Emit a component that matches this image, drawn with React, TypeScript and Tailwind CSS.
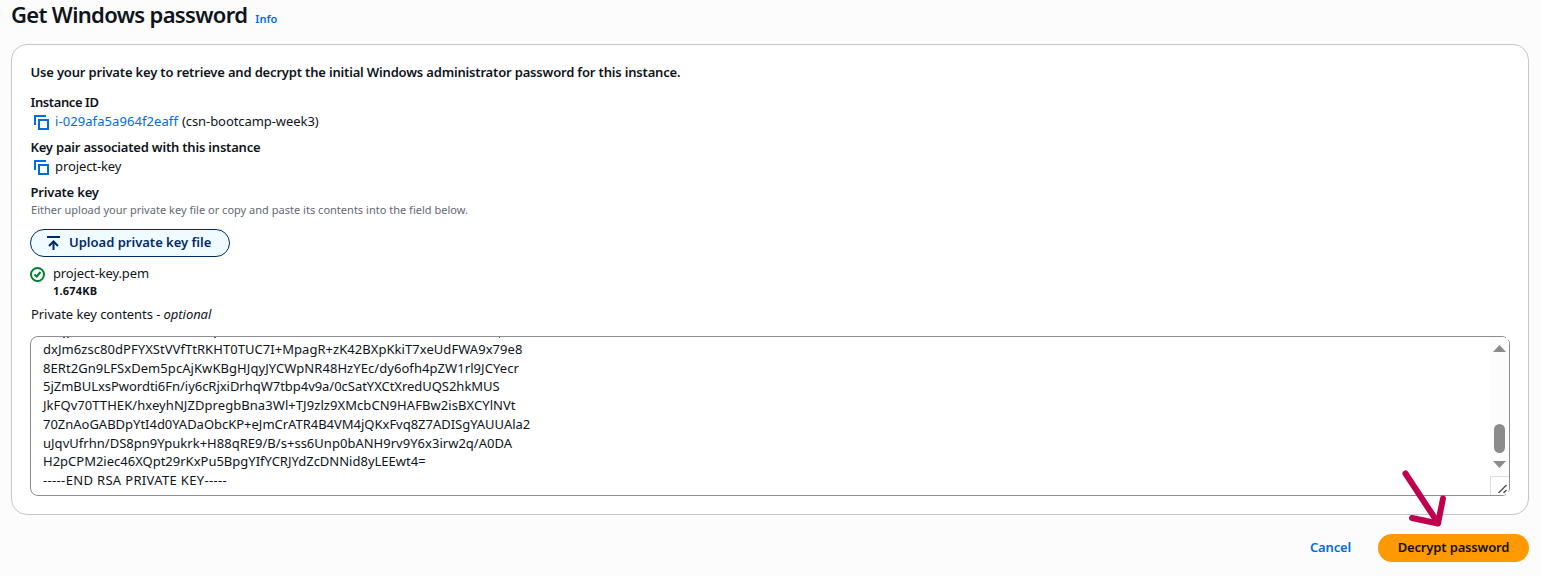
import React from 'react';

const keyLines: { text: string; cls: string }[] = [
  { text: 'dxJm6zsc80dPFYXStVVfTtRKHT0TUC7I+MpagR+zK42BXpKkiT7xeUdFWA9x79e8', cls: 'tracking-[0.05px]' },
  { text: '8ERt2Gn9LFSxDem5pcAjKwKBgHJqyJYCWpNR48HzYEc/dy6ofh4pZW1rl9JCYecr', cls: 'tracking-[0.065px]' },
  { text: '5jZmBULxsPwordti6Fn/iy6cRjxiDrhqW7tbp4v9a/0cSatYXCtXredUQS2hkMUS', cls: 'tracking-[-0.03px]' },
  { text: 'JkFQv70TTHEK/hxeyhNJZDpregbBna3Wl+TJ9zlz9XMcbCN9HAFBw2isBXCYlNVt', cls: 'tracking-[0.065px]' },
  { text: '70ZnAoGABDpYtI4d0YADaObcKP+eJmCrATR4B4VM4jQKxFvq8Z7ADISgYAUUAla2', cls: 'tracking-[-0.015px]' },
  { text: 'uJqvUfrhn/DS8pn9Ypukrk+H88qRE9/B/s+ss6Unp0bANH9rv9Y6x3irw2q/A0DA', cls: 'tracking-[0.02px]' },
  { text: 'H2pCPM2iec46XQpt29rKxPu5BpgYIfYCRJYdZcDNNid8yLEEwt4=', cls: 'tracking-[0px]' },
  { text: '-----END RSA PRIVATE KEY-----', cls: 'tracking-[0.34px]' },
];

function CopyIcon() {
  return (
    <svg width="16" height="16" viewBox="0 0 16 16" fill="none" stroke="#006ce0" strokeWidth="2" className="ml-[3px] mr-[6px] mt-px shrink-0">
      <path d="M2 11V2H13" />
      <path d="M6 6H15V15H6Z" />
    </svg>
  );
}

function UploadIcon() {
  return (
    <svg width="16" height="16" viewBox="0 0 16 16" fill="none" stroke="#002b66" strokeWidth="2" className="shrink-0">
      <path d="M1 2H14" />
      <path d="M7.5 15V6" />
      <path d="M3 11L7.5 6.5L12 11" />
    </svg>
  );
}

function CheckIcon() {
  return (
    <svg width="16" height="16" viewBox="0 0 16 16" fill="none" stroke="#00802f" strokeWidth="2" className="shrink-0">
      <circle cx="7.5" cy="8.5" r="6.5" />
      <path d="M4.5 8.5L6.7 10.5L10.5 6" />
    </svg>
  );
}

function Scrollbar() {
  return (
    <div className="flex w-[19px] shrink-0 flex-col bg-[#fcfcfc]">
      <svg width="19" height="158" viewBox="0 0 19 158" className="block">
        <path d="M3 15L9.5 8L16 15Z" fill="#8b8b8b" />
        <rect x="4" y="87" width="11" height="29" rx="5.5" fill="#8b8b8b" />
        <path d="M3 124L9.5 131L16 124Z" fill="#8b8b8b" />
        <rect x="0.5" y="139.5" width="20" height="20" fill="#fff" stroke="#dcdcdc" />
        <path d="M8.5 156L16.5 148M13.5 156L16.5 153" stroke="#505050" strokeWidth="1.4" />
      </svg>
    </div>
  );
}

export default function App() {
  return (
    <div className="relative h-[576px] w-[1542px] overflow-hidden bg-[#fcfcfd] font-['Noto_Sans',sans-serif] text-[13px] leading-[20px] text-[#0f141a]">
      <header className="flex h-[44px] items-start pl-[11px]">
        <h1 className="whitespace-nowrap text-[22px] font-semibold leading-[29px] tracking-[-0.66px]">Get Windows password</h1>
        <a className="ml-[8px] mt-[9px] text-[11px] font-semibold leading-[20px] text-[#006ce0]">Info</a>
      </header>

      <main className="ml-[11px] h-[471px] w-[1518px] whitespace-nowrap rounded-[16px] border border-[#c6c6cd] bg-white pl-[18px] pt-[17px]">
        <p className="h-[30px] pl-[0.5px] font-semibold tracking-[-0.175px]">Use your private key to retrieve and decrypt the initial Windows administrator password for this instance.</p>

        <div className="h-[45px]">
          <div className="h-[19px] pl-[0.5px] font-semibold tracking-[-0.4px]">Instance ID</div>
          <div className="flex h-[20px] items-center">
            <CopyIcon />
            <a className="tracking-[0.08px] text-[#006ce0]">i-029afa5a964f2eaff</a>
            <span className="ml-[4px] tracking-[-0.07px]">(csn-bootcamp-week3)</span>
          </div>
        </div>

        <div className="h-[45px]">
          <div className="h-[19px] pl-[0.5px] font-semibold tracking-[-0.2px]">Key pair associated with this instance</div>
          <div className="flex h-[20px] items-center">
            <CopyIcon />
            <span className="tracking-[-0.1px]">project-key</span>
          </div>
        </div>

        <div className="h-[19px] pl-[0.5px] font-semibold tracking-[-0.2px]">Private key</div>
        <div className="h-[28px] pl-px text-[11px] leading-[18px] tracking-[0.015px] text-[#656871]">Either upload your private key file or copy and paste its contents into the field below.</div>

        <button className="flex h-[28px] w-[200px] items-center rounded-full border border-[#002b66] bg-[#f0fbff] pl-[15px] font-semibold text-[#002b66]">
          <UploadIcon />
          <span className="-mt-[2px] ml-[7px]">Upload private key file</span>
        </button>

        <div className="mt-[6px] flex h-[41px]">
          <div className="pt-[3px]"><CheckIcon /></div>
          <div className="ml-[7px]">
            <div className="h-[19px] tracking-[-0.13px]">project-key.pem</div>
            <div className="h-[22px] text-[11px] font-bold leading-[18px] tracking-[0.2px]">1.674KB</div>
          </div>
        </div>

        <div className="h-[32px] pl-px tracking-[-0.06px]"><span>Private key contents - </span><i>optional</i></div>

        <div className="relative h-[160px] w-[1480px]">
          <div className="flex h-full w-full overflow-hidden rounded-[8px] border border-[#8c8c94] bg-white">
            <div className="grow pl-[12px] pt-[3px] leading-[18.7px]">
              {keyLines.map((l) => (
                <div key={l.text}><span className={l.cls}>{l.text}</span></div>
              ))}
            </div>
            <Scrollbar />
          </div>
          <svg width="480" height="2" viewBox="0 0 480 2" className="absolute left-0 top-px" stroke="#0f141a" strokeWidth="1">
            <path d="M33 0.5H35M37 0.5H39M184 0.5H186M469 0.5H470" opacity="0.7" />
          </svg>
          <span className="absolute right-0 top-0 size-[4px] bg-[#fcfcfc]" />
          <span className="absolute bottom-0 right-0 size-[4px] bg-white" />
        </div>
      </main>

      <footer className="flex items-center justify-end pr-[13px] pt-[19px] font-semibold">
        <a className="-mt-[2px] mr-[27px] tracking-[-0.15px] text-[#006ce0]">Cancel</a>
        <button className="h-[28px] w-[151px] whitespace-nowrap rounded-full bg-[#ff9900] pb-[2px] tracking-[-0.15px] text-[#0f141a]">Decrypt password</button>
      </footer>

      <svg width="60" height="70" viewBox="1395 463 60 70" className="absolute left-[1395px] top-[463px]" fill="none" stroke="#c0004e" strokeWidth="6" strokeLinecap="round" strokeLinejoin="round">
        <path d="M1405.5 473.5L1438 523" />
        <path d="M1412 518L1438 523.5L1443 498.5" />
      </svg>
    </div>
  );
}
